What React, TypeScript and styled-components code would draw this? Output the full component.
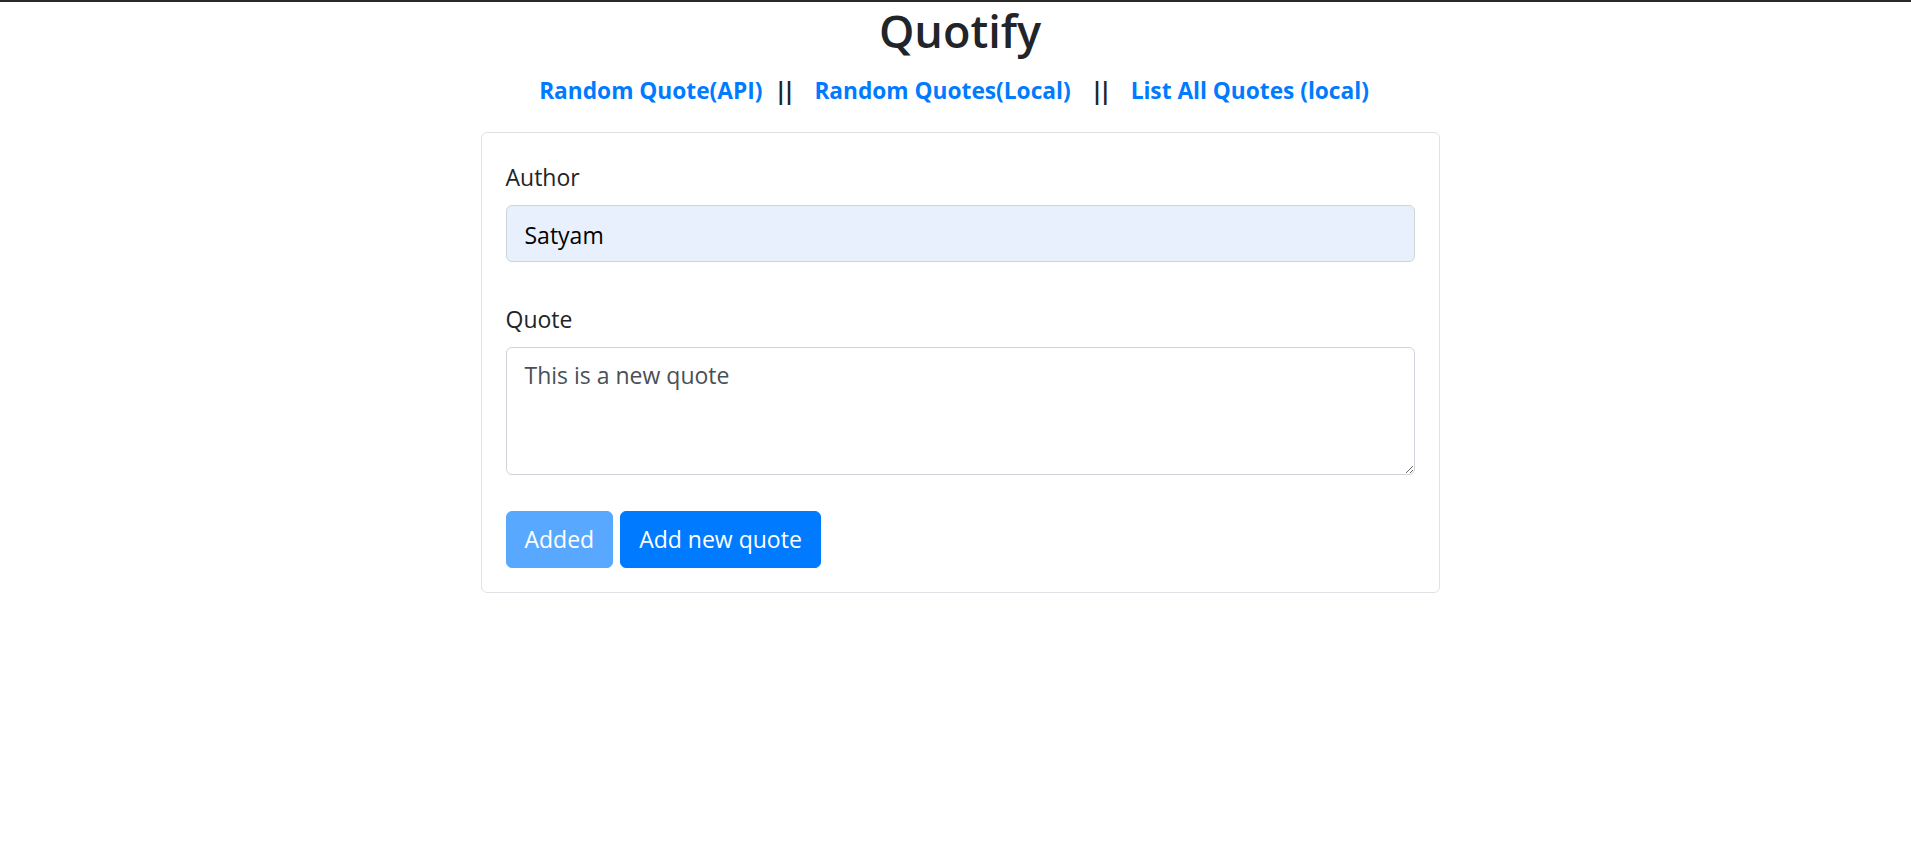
import React from "react";
import styled, { createGlobalStyle } from "styled-components";

const GlobalStyle = createGlobalStyle`
  html, body {
    margin: 0;
    padding: 0;
    background: #ffffff;
  }
  body {
    font-family: "Open Sans", "Noto Sans", sans-serif;
    color: #212529;
  }
  * { box-sizing: border-box; }
`;

const TopRule = styled.div`
  height: 2px;
  background: #2a2a2a;
`;

const Page = styled.div`
  display: flex;
  flex-direction: column;
  align-items: center;
  padding-left: 9px;
`;

const Title = styled.h2`
  margin: 0 0 12px;
  font-size: 45px;
  font-weight: 600;
  line-height: 57.6px;
  color: #212529;
`;

const Nav = styled.nav`
  display: flex;
  align-items: baseline;
  padding-right: 12px;
  padding-top: 1px;
  height: 37px;
  line-height: 36px;
  font-size: 22.7px;
  font-weight: 700;
  margin-bottom: 23px;
`;

const NavLink = styled.a`
  color: #007bff;
  text-decoration: none;
  cursor: pointer;
`;

const Separator = styled.span<{ $left: number; $right: number }>`
  color: #212529;
  letter-spacing: -4px;
  margin: 0 ${(p) => p.$right}px 0 ${(p) => p.$left}px;
`;

const Card = styled.div`
  width: 959px;
  border: 1px solid #dee2e6;
  border-radius: 6px;
  padding: 24px;
  display: flex;
  flex-direction: column;
`;

const Field = styled.div<{ $gap: number }>`
  display: flex;
  flex-direction: column;
  margin-bottom: ${(p) => p.$gap}px;
`;

const Label = styled.label`
  font-size: 23px;
  line-height: 36px;
  padding-top: 2px;
  margin-bottom: 10px;
  color: #212529;
`;

const TextInput = styled.input`
  height: 57px;
  width: 100%;
  padding: 3px 18px 0;
  font-family: "Open Sans", "Noto Sans", sans-serif;
  font-size: 23px;
  color: #000000;
  background: #e8f0fe;
  border: 1px solid #ced4da;
  border-radius: 6px;
  outline: none;
`;

const TextArea = styled.textarea`
  height: 128px;
  width: 100%;
  padding: 9px 18px;
  font-family: "Open Sans", "Noto Sans", sans-serif;
  font-size: 23px;
  line-height: 36px;
  color: #495057;
  background: #ffffff;
  border: 1px solid #ced4da;
  border-radius: 6px;
  outline: none;
  resize: vertical;
  display: block;
`;

const ButtonRow = styled.div`
  display: flex;
  gap: 7px;
`;

const Button = styled.button<{ $disabledLook?: boolean }>`
  height: 57px;
  padding: 0 18px;
  font-family: "Open Sans", "Noto Sans", sans-serif;
  font-size: 23px;
  line-height: 36px;
  color: #ffffff;
  background: #007bff;
  border: 1px solid #007bff;
  border-radius: 6px;
  opacity: ${(p) => (p.$disabledLook ? 0.65 : 1)};
  cursor: ${(p) => (p.$disabledLook ? "default" : "pointer")};
`;

export default function App() {
  return (
    <>
      <GlobalStyle />
      <TopRule />
      <Page>
        <Title>Quotify</Title>
        <Nav>
          <NavLink>Random Quote(API)</NavLink>
          <Separator $left={12} $right={23}>||</Separator>
          <NavLink>Random Quotes(Local)</NavLink>
          <Separator $left={20} $right={23}>||</Separator>
          <NavLink>List All Quotes (local)</NavLink>
        </Nav>
        <Card>
          <Field $gap={37}>
            <Label htmlFor="author">Author</Label>
            <TextInput id="author" defaultValue="Satyam" />
          </Field>
          <Field $gap={36}>
            <Label htmlFor="quote">Quote</Label>
            <TextArea id="quote" defaultValue="This is a new quote" />
          </Field>
          <ButtonRow>
            <Button $disabledLook disabled>
              Added
            </Button>
            <Button>Add new quote</Button>
          </ButtonRow>
        </Card>
      </Page>
    </>
  );
}
